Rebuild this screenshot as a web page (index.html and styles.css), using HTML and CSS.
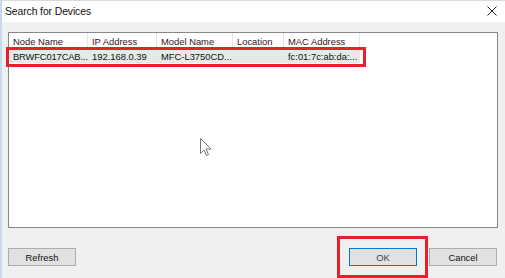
FILE: index.html
```html
<!DOCTYPE html>
<html>
<head>
<meta charset="utf-8">
<link rel="stylesheet" href="styles.css">
</head>
<body>
<div class="window">
  <div class="titlebar">
    <span class="title">Search for Devices</span>
    <svg class="close" width="10" height="10" viewBox="0 0 10 10"><path d="M0.5 0.5 L9.5 9.5 M9.5 0.5 L0.5 9.5" stroke="#222" stroke-width="1" fill="none"/></svg>
  </div>
  <div class="content">
    <div class="list">
      <div class="header">
        <div class="cell c1">Node Name</div>
        <div class="cell c2">IP Address</div>
        <div class="cell c3">Model Name</div>
        <div class="cell c4">Location</div>
        <div class="cell c5">MAC Address</div>
      </div>
      <div class="row">
        <div class="cell c1 tight">BRWFC017CAB...</div>
        <div class="cell c2">192.168.0.39</div>
        <div class="cell c3">MFC-L3750CD...</div>
        <div class="cell c4"></div>
        <div class="cell c5">fc:01:7c:ab:da:...</div>
      </div>
    </div>
    <div class="buttons">
      <button class="btn">Refresh</button>
      <div class="spacer"></div>
      <button class="btn ok">OK</button>
      <button class="btn">Cancel</button>
    </div>
  </div>
  <div class="mark mark-row"></div>
  <div class="mark mark-ok"></div>
  <svg class="cursor" width="12" height="19" viewBox="0 0 12 19"><path d="M0.5 0.5 L0.5 15.5 L4 12 L6.5 17.5 L8.5 16.5 L6 11 L11 11 Z" fill="#fff" stroke="#777" stroke-width="1" stroke-linejoin="miter"/></svg>
</div>
</body>
</html>
```
FILE: styles.css
```css
html, body {
  margin: 0;
  padding: 0;
  background: #ffffff;
}
.window {
  position: relative;
  width: 505px;
  height: 278px;
  box-sizing: border-box;
  border-left: 2px solid #c9d8ec;
  border-top: 1px solid #d6dbe3;
  background: #f0f0f0;
  display: flex;
  flex-direction: column;
  font-family: "Liberation Sans", Arial, sans-serif;
  overflow: hidden;
}
.titlebar {
  height: 21px;
  background: #ffffff;
  display: flex;
  align-items: center;
  justify-content: space-between;
  padding: 0 8px 0 3px;
  flex: none;
}
.title {
  font-size: 10.4px;
  color: #111;
  letter-spacing: -0.1px;
}
.close {
  display: block;
  margin-top: -2px;
}
.content {
  flex: 1;
  display: flex;
  flex-direction: column;
  padding: 10px 7px 0 6px;
}
.list {
  height: 196px;
  box-sizing: border-box;
  border: 1px solid #828790;
  background: #ffffff;
  flex: none;
}
.header, .row {
  display: flex;
}
.header {
  height: 17px;
  align-items: center;
}
.header .cell {
  height: 17px;
  line-height: 17px;
  border-right: 1px solid #e5e5e5;
  color: #222;
}
.row {
  height: 13px;
  width: 351px;
  background: #e8e8e8;
  align-items: center;
}
.row .cell {
  line-height: 13px;
  color: #111;
}
.cell {
  font-size: 9.4px;
  box-sizing: border-box;
  padding-left: 4px;
  white-space: nowrap;
  flex: none;
}
.tight {
  letter-spacing: -0.15px;
}
.c1 { width: 79px; }
.c2 { width: 69px; }
.c3 { width: 76px; }
.c4 { width: 51px; }
.c5 { width: 76px; }
.buttons {
  display: flex;
  gap: 13px;
  margin-top: 20px;
  padding-right: 1px;
}
.spacer {
  flex: 1;
}
.btn {
  width: 68px;
  height: 18px;
  box-sizing: border-box;
  border: 1px solid #adadad;
  background: #e1e1e1;
  font-family: "Liberation Sans", Arial, sans-serif;
  font-size: 9.4px;
  color: #111;
  padding: 0;
  margin: 0;
}
.btn.ok {
  border-color: #0078d7;
  color: #444;
  margin-right: -1px;
}
.mark {
  position: absolute;
  border: 3px solid #e8202a;
  box-sizing: border-box;
}
.mark-row {
  left: 4px;
  top: 46px;
  width: 360px;
  height: 20px;
}
.mark-ok {
  left: 335px;
  top: 235px;
  width: 91px;
  height: 42px;
}
.cursor {
  position: absolute;
  left: 198px;
  top: 137px;
}
```
